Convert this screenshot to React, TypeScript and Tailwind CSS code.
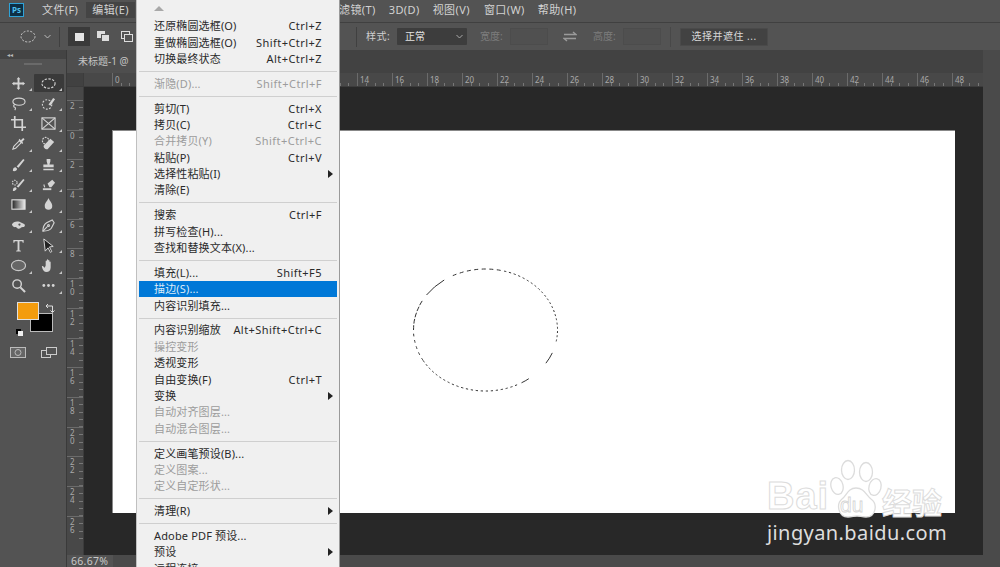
import type { ReactNode } from "react";

type MenuRow = { label?: string; keys?: string; off?: boolean; sub?: boolean; active?: boolean; sep?: boolean };

const menuRows: MenuRow[] = [
  { label: "还原椭圆选框(O)", keys: "Ctrl+Z" },
  { label: "重做椭圆选框(O)", keys: "Shift+Ctrl+Z" },
  { label: "切换最终状态", keys: "Alt+Ctrl+Z" },
  { sep: true },
  { label: "渐隐(D)...", keys: "Shift+Ctrl+F", off: true },
  { sep: true },
  { label: "剪切(T)", keys: "Ctrl+X" },
  { label: "拷贝(C)", keys: "Ctrl+C" },
  { label: "合并拷贝(Y)", keys: "Shift+Ctrl+C", off: true },
  { label: "粘贴(P)", keys: "Ctrl+V" },
  { label: "选择性粘贴(I)", sub: true },
  { label: "清除(E)" },
  { sep: true },
  { label: "搜索", keys: "Ctrl+F" },
  { label: "拼写检查(H)..." },
  { label: "查找和替换文本(X)..." },
  { sep: true },
  { label: "填充(L)...", keys: "Shift+F5" },
  { label: "描边(S)...", active: true },
  { label: "内容识别填充..." },
  { sep: true },
  { label: "内容识别缩放", keys: "Alt+Shift+Ctrl+C" },
  { label: "操控变形", off: true },
  { label: "透视变形" },
  { label: "自由变换(F)", keys: "Ctrl+T" },
  { label: "变换", sub: true },
  { label: "自动对齐图层...", off: true },
  { label: "自动混合图层...", off: true },
  { sep: true },
  { label: "定义画笔预设(B)..." },
  { label: "定义图案...", off: true },
  { label: "定义自定形状...", off: true },
  { sep: true },
  { label: "清理(R)", sub: true },
  { sep: true },
  { label: "Adobe PDF 预设..." },
  { label: "预设", sub: true },
  { label: "远程连接..." },
];

const Svg = ({ children, size = 15 }: { children: ReactNode; size?: number }) => (
  <svg width={size} height={size} viewBox="0 0 16 16" fill="none" stroke="currentColor" strokeWidth="1.2" className="text-[#d4d4d4]">
    {children}
  </svg>
);

const solid = { fill: "currentColor", stroke: "none" };

const tools: ReactNode[] = [
  <path d="M8 1l2 2.500H9V7h3.500V6L15 8l-2.500 2V9H9v3.500h1L8 15l-2-2.500h1V9H3.500v1L1 8l2.500-2v1H7V3.500H6z" {...solid} />,
  <ellipse cx="8" cy="8" rx="7" ry="5" strokeDasharray="2.500 1.500" />,
  <><ellipse cx="8.500" cy="6" rx="6.500" ry="3.800" /><path d="M4 9c-2 1-1 3 0 3s1 2 0 3" /></>,
  <><ellipse cx="6.500" cy="9" rx="5" ry="5" strokeDasharray="2 1.500" /><path d="M8 9l5-7 2 1.500-5 7z" {...solid} /></>,
  <path d="M4 0v12h12M0 4h12v12" strokeWidth="1.800" />,
  <><rect x="1" y="2" width="14" height="12" /><path d="M1 2l14 12M15 2L1 14" /></>,
  <><path d="M2 14l1-3 6-6 2 2-6 6z" /><path d="M9 3l1.500 1.500L13 2l1.500 1.500L12 6l1 1.500-1 1-4-4z" {...solid} /></>,
  <><circle cx="5" cy="5" r="3.500" strokeDasharray="2 1" /><path d="M3 10l7-7 4 3.500-7 7.500c-2 1-5-2-4-4z" {...solid} /></>,
  <path d="M2 15c0-3 1-4 3-4l1.500 1.500c0 2-2 3-4.500 2.500zM6 10L13 2l1.500 1.200L8 11.500z" {...solid} />,
  <path d="M6 2h4v2.500L9 8h4.500v3h-11V8H7L6 4.500zM2.500 12.500h11V14h-11z" {...solid} />,
  <><path d="M2 15c0-3 1-4 3-4l1 1c0 2-2 3-4 3zM6 10l7-8 1.500 1.200-6.500 8z" {...solid} /><circle cx="4" cy="6" r="2.500" strokeDasharray="1.500 1" /></>,
  <><path d="M7 7l5-4 3 3-4 5H9z" {...solid} /><path d="M2 13h9" strokeWidth="2" /><path d="M3 8l1 3" /></>,
  <><defs><linearGradient id="grad"><stop offset="0" stopColor="#222" /><stop offset="1" stopColor="#eee" /></linearGradient></defs><rect x="1" y="3" width="14" height="10" fill="url(#grad)" stroke="#ddd" /></>,
  <path d="M8 1c1 3 4 5 4 8.500a4 4 0 0 1-8 0C4 6 7 4 8 1z" {...solid} />,
  <><path d="M1 7c1-3 5-4 8-3 2 1 5 2 6 3.500l-1 2c-2 0-3 0-4 1.500-2 1-3 0-4-1-1 0-4 0-5-3z" {...solid} /><circle cx="9" cy="7" r="1.200" fill="#535353" stroke="none" /></>,
  <><path d="M2 14c0-4 1-7 4-9l6-3 2 3-3 6c-2 3-5 3-9 3z" /><path d="M2 14l5-5" /><circle cx="8" cy="8" r="1" /></>,
  <path d="M2.500 2h11v3h-1l-.500-1.500H9V13l1.500.500V14.500h-5v-1L7 13V3.500H4L3.500 5h-1z" {...solid} />,
  <path d="M3 1l10 8-4 .500 2.500 5-1.500 .800L7.500 10.500 4.500 14z" fill="#222" stroke="#ddd" strokeWidth="1" />,
  <ellipse cx="8" cy="8" rx="7.500" ry="5.500" strokeWidth="1.200" fill="#666" stroke="#c8c8c8" />,
  <path d="M5 8V3.500c0-1 1.300-1 1.300 0V7V2.200c0-1 1.400-1 1.400 0V7V2.800c0-1 1.300-1 1.300 0V7.500V4.500c0-1 1.300-1 1.300 0V10c0 3-2 5-4.500 5S2 13 1 9.500c-.3-1 1-1.500 1.500-.5L4 10.500z" {...solid} />,
  <><circle cx="6.500" cy="6.500" r="4.500" strokeWidth="1.500" /><path d="M10 10l5 5" strokeWidth="2.200" /></>,
  <><circle cx="3" cy="8" r="1.500" {...solid} /><circle cx="8" cy="8" r="1.500" {...solid} /><circle cx="13" cy="8" r="1.500" {...solid} /></>,
];

// 选区的虚线是逐段算出来的,图里有几处长段和缺口
const marquee = () => {
  const cx = 72.5;
  const cy = 62;
  const pt = (deg: number) => {
    const a = (deg * Math.PI) / 180;
    return `${(cx + 72 * Math.cos(a)).toFixed(1)} ${(cy + 61 * Math.sin(a)).toFixed(1)}`;
  };
  const parts: string[] = [];
  const arc = (from: number, to: number) => parts.push(`M${pt(from)}L${pt((from + to) / 2)}L${pt(to)}`);
  arc(215, 235);
  arc(22, 33);
  arc(53, 60);
  for (let d = 243; d < 285; d += 6) arc(d, d + 3.200);
  for (let d = 285; d < 370; d += 4) arc(d, d + 1.800);
  for (let d = 64; d < 150; d += 4) arc(d, d + 1.800);
  for (let d = 150; d < 210; d += 6) arc(d, d + (d > 175 ? 4.500 : 2.500));
  return parts.join("");
};

const Corner = () => <span className="absolute right-[2px] bottom-[1px] h-0 w-0 border-b-[3px] border-l-[3px] border-b-[#c4c4c4] border-l-transparent" />;

const hLabels = Array.from({ length: 25 }, (_, i) => i * 2);
const vLabels = Array.from({ length: 14 }, (_, i) => i * 2);

const ToolPanel = () => (
  <div className="flex h-full w-[67px] shrink-0 flex-col border-r border-[#3a3a3a] bg-[#535353]">
    <div className="flex h-[9px] items-center bg-[#444] pl-[7px] text-[6px] leading-none text-[#bbb]">◂◂</div>
    <div className="mx-auto mt-[4px] h-[2px] w-[18px] bg-[#6a6a6a]" />
    <div className="mt-[9px] grid grid-cols-[30px_30px] justify-center gap-y-[2.300px] pl-[4px] pr-[3px]">
      {tools.map((t, i) => (
        <div key={i} className={`relative flex h-[18px] items-center justify-center ${i === 1 ? "rounded-[1px] bg-[#3a3a3a]" : ""}`}>
          <Svg>{t}</Svg>
          {i !== 4 && i !== 16 && i !== 20 ? <Corner /> : null}
        </div>
      ))}
    </div>
    <div className="relative mt-[7px] h-[38px]">
      <div className="absolute left-[30px] top-[11px] h-[19px] w-[23px] border border-[#bbb] bg-black" />
      <div className="absolute left-[17px] top-0 h-[18px] w-[22px] border border-[#e0e0e0] bg-[#f39c0e]" />
      <svg width="11" height="11" viewBox="0 0 11 11" fill="none" stroke="#ddd" className="absolute left-[45px] top-[1px]">
        <path d="M1 3h6.500v6M1 3l2-2M1 3l2 2M7.500 9.500L5.500 7.500M7.500 9.500l2-2" />
      </svg>
      <div className="absolute left-[16px] top-[27px] h-[5px] w-[5px] bg-black" />
      <div className="absolute left-[18px] top-[29px] h-[5px] w-[5px] bg-[#eee]" />
    </div>
    <div className="mt-[7px] flex justify-between pl-[10px] pr-[9px]">
      <svg width="16" height="11" viewBox="0 0 16 11" fill="none" stroke="#bbb">
        <rect x=".5" y=".5" width="15" height="10" fill="#666" />
        <circle cx="8" cy="5.500" r="3" />
      </svg>
      <div className="relative">
        <svg width="16" height="11" viewBox="0 0 16 11" fill="none" stroke="#ccc">
          <rect x=".5" y="3.500" width="9" height="7" />
          <rect x="5.500" y=".5" width="10" height="7" fill="#535353" />
        </svg>
      </div>
    </div>
  </div>
);

const Canvas = () => (
  <div className="flex min-h-0 flex-1">
    <div className="flex w-[17px] shrink-0 flex-col overflow-hidden border-r border-[#3c3c3c] bg-[#484848] pt-[13px]">
      {[-2, ...vLabels].map((n) => (
        <div
          key={n}
          className="h-[29.700px] shrink-0 border-t border-[#6b6b6b] bg-[repeating-linear-gradient(180deg,transparent_0,transparent_6.400px,#777_6.400px,#777_7.400px)] bg-[length:4px_100%] bg-right bg-no-repeat pl-[3px] pt-[1px] text-[8px] leading-[8px] text-[#a9a9a9]"
        >
          <div className="w-[6px] break-all">{Math.abs(n)}</div>
        </div>
      ))}
    </div>
    <div className="flex flex-1 flex-col bg-[#282828] px-[28px] pb-[42px] pt-[43px]">
      <div className="relative flex-1 border-l border-t border-[#888] bg-white">
        <svg width="146" height="124" viewBox="0 0 146 124" fill="none" stroke="#333" strokeWidth="1" className="absolute left-[300px] top-[137px]">
          <path d={marquee()} />
        </svg>
      </div>
    </div>
  </div>
);

const Baidu = () => (
  <div className="pointer-events-none absolute left-[767px] top-[458px] h-[90px] w-[185px]">
    <div className="absolute left-0 top-[18px] font-['Liberation_Sans',sans-serif] text-[38px] font-bold leading-[40px] tracking-[1px] text-white [-webkit-text-stroke:1px_#dcdcdc]">Bai</div>
    <svg width="60" height="62" viewBox="0 0 60 62" className="absolute left-[63px] top-0" fill="#fff" stroke="#dcdcdc" strokeWidth="1.300">
      <ellipse cx="18" cy="12" rx="6.500" ry="9.500" />
      <ellipse cx="36" cy="14" rx="6.500" ry="9.500" />
      <ellipse cx="7" cy="28" rx="6" ry="8.500" transform="rotate(-15 7 28)" />
      <ellipse cx="45" cy="29" rx="6" ry="8.500" transform="rotate(15 45 29)" />
      <path d="M26 30c-8 0-9 7-14 11-6 5-4 18 6 18 4 0 6-1 9-1s5 1 9 1c10 0 12-13 5-18-5-4-7-11-15-11z" />
    </svg>
    <div className="absolute left-[73px] top-[37px] font-['Liberation_Sans',sans-serif] text-[21px] leading-[20px] text-white [-webkit-text-stroke:.8px_#d4d4d4]">du</div>
    <div className="absolute left-[115px] top-[27px] font-['Noto_Sans_CJK_SC',sans-serif] text-[30px] font-bold leading-[32px] text-white [-webkit-text-stroke:1px_#dcdcdc]">经验</div>
    <div className="absolute left-0 top-[63px] font-['Noto_Sans',sans-serif] text-[20px] leading-[24px] tracking-[.4px] text-[#dedede]">jingyan.baidu.com</div>
  </div>
);

const EditMenu = () => (
  <div className="absolute left-[137px] top-0 h-[567px] w-[202px] overflow-hidden border-x-2 border-x-[#f0f0f0] bg-[#f0f0f0] text-[11px] text-[#2a2a2a] shadow-[1px_0_0_#9a9a9a,-1px_0_0_#c0c0c0]">
    <div className="flex h-[18px] items-start pl-[15px] pt-[6px]">
      <span className="h-0 w-0 border-x-[5px] border-b-[5px] border-x-transparent border-b-[#a8a8a8]" />
    </div>
    {menuRows.map((r, i) =>
      r.sep ? (
        <div key={i} className="flex h-[8.400px] items-center">
          <div className="h-px w-full bg-[#cfcfcf]" />
        </div>
      ) : (
        <div
          key={i}
          className={`relative flex h-[16.400px] items-center justify-between pl-[15px] pr-[15px] leading-[16px] tracking-[.15px] ${r.active ? "bg-[#0078d7] text-[#dcebf8]" : ""} ${r.off ? "text-[#9c9c9c]" : ""}`}
        >
          <span>{r.label}</span>
          {r.keys ? <span className="tracking-[.45px]">{r.keys}</span> : null}
          {r.sub ? <span className="absolute right-[4px] h-0 w-0 border-y-[4px] border-l-[5px] border-y-transparent border-l-[#222]" /> : null}
        </div>
      ),
    )}
  </div>
);

export default function App() {
  return (
    <div className="relative flex h-[567px] w-[1000px] flex-col overflow-hidden bg-[#535353] font-['Noto_Sans','Noto_Sans_CJK_SC',sans-serif]">
      {/* menu bar */}
      <div className="flex h-[23px] shrink-0 items-center border-b border-[#404040] pb-[2px] text-[11px] leading-[16px] tracking-[.4px] text-[#d2d2d2]">
        <div className="ml-[9px] flex h-[14px] w-[15px] items-center justify-center border border-[#2fa3d8] bg-[#0d2f45] text-[8px] font-bold leading-none tracking-normal text-[#4fc0ef]">Ps</div>
        <span className="ml-[18px]">文件(F)</span>
        <span className="ml-[8px] bg-[#444] px-[6px]">编辑(E)</span>
        <span className="ml-[204px]">滤镜(T)</span>
        <span className="ml-[13px]">3D(D)</span>
        <span className="ml-[13px]">视图(V)</span>
        <span className="ml-[14px]">窗口(W)</span>
        <span className="ml-[13px]">帮助(H)</span>
      </div>

      {/* options bar */}
      <div className="flex h-[27px] shrink-0 items-center text-[10px] text-[#cfcfcf]">
        <svg width="16" height="13" viewBox="0 0 16 13" fill="none" stroke="#ccc" strokeDasharray="2 1.500" className="ml-[20px]">
          <ellipse cx="8" cy="6.500" rx="7" ry="5.500" />
        </svg>
        <svg width="7" height="5" viewBox="0 0 7 5" fill="none" stroke="#bbb" className="ml-[8px]">
          <path d="M.5 1l3 3 3-3" />
        </svg>
        <div className="ml-[8px] h-[20px] w-px bg-[#404040]" />
        <div className="ml-[8px] flex h-[19px] w-[22px] items-center justify-center bg-[#3a3a3a]">
          <div className="h-[8px] w-[9px] bg-[#e4e4e4]" />
        </div>
        <div className="relative ml-[7px] h-[11px] w-[13px]">
          <div className="absolute left-0 top-0 h-[7px] w-[8px] bg-[#ddd]" />
          <div className="absolute left-[4px] top-[3px] h-[8px] w-[9px] border border-[#535353] bg-[#ddd]" />
        </div>
        <div className="relative ml-[11px] h-[11px] w-[13px]">
          <div className="absolute left-0 top-0 h-[8px] w-[9px] border border-[#ddd]" />
          <div className="absolute left-[3px] top-[3px] h-[8px] w-[9px] border border-[#ddd] bg-[#535353]" />
        </div>
        <div className="ml-[222px] h-[20px] w-px bg-[#404040]" />
        <span className="ml-[9px] w-[31px] tracking-[.5px]">样式:</span>
        <div className="flex h-[17px] w-[70px] items-center justify-between rounded-[1px] bg-[#3d3d3d] pl-[8px] pr-[4px] text-[#e2e2e2]">
          <span>正常</span>
          <svg width="7" height="5" viewBox="0 0 7 5" fill="none" stroke="#aaa">
            <path d="M.5 1l3 3 3-3" />
          </svg>
        </div>
        <span className="ml-[13px] w-[30px] text-[#7d7d7d]">宽度:</span>
        <div className="h-[17px] w-[38px] border border-[#4c4c4c] bg-[#505050]" />
        <svg width="14" height="11" viewBox="0 0 14 11" fill="none" stroke="#9a9a9a" className="ml-[15px]">
          <path d="M1 3.500h12L10 1M13 7.500H1L4 10" strokeWidth="1.400" />
        </svg>
        <span className="ml-[16px] w-[30px] text-[#7d7d7d]">高度:</span>
        <div className="h-[17px] w-[38px] border border-[#4c4c4c] bg-[#505050]" />
        <div className="ml-[9px] h-[20px] w-px bg-[#484848]" />
        <div className="ml-[9px] flex h-[18px] w-[88px] items-center justify-center rounded-[1px] border border-[#4a4a4a] bg-[#424242] tracking-[.5px] text-[#d8d8d8]">选择并遮住 ...</div>
      </div>

      {/* body */}
      <div className="flex min-h-0 flex-1">
        <ToolPanel />
        <div className="flex min-w-0 flex-1 flex-col bg-[#4a4a4a]">
          <div className="flex min-h-0 flex-1">
            <div className="flex min-w-0 flex-1 flex-col">
              <div className="flex h-[23px] shrink-0 bg-[#424242]">
                <div className="flex w-[80px] items-center bg-[#4e4e4e] pl-[11px] text-[10px] text-[#c4c4c4]">未标题-1 @</div>
              </div>
              <div className="flex h-[14px] shrink-0 border-b border-[#3c3c3c] bg-[#484848]">
                <div className="w-[17px] shrink-0 border-r border-[#3c3c3c] bg-[#414141]" />
                <div className="flex flex-1 overflow-hidden pl-[28px]">
                  {hLabels.map((n) => (
                    <div
                      key={n}
                      className="w-[35px] shrink-0 border-l border-[#6b6b6b] bg-[repeating-linear-gradient(90deg,transparent_0,transparent_7.750px,#777_7.750px,#777_8.750px)] bg-[length:100%_3px] bg-bottom bg-no-repeat pl-[2px] text-[8px] leading-[13px] text-[#a9a9a9]"
                    >
                      {/* 2-12 are under the open menu */}
                      {n > 0 && n < 14 ? "" : n}
                    </div>
                  ))}
                </div>
              </div>
              <Canvas />
            </div>
            <div className="w-[17px] shrink-0 bg-[#4a4a4a]" />
          </div>
          <div className="flex h-[12px] shrink-0 bg-[#4a4a4a]">
            <div className="w-[46px] bg-[#535353] pl-[4px] text-[10.500px] leading-[12px] tracking-[.3px] text-[#c8c8c8]">66.67%</div>
          </div>
        </div>
      </div>

      <EditMenu />
      <Baidu />
    </div>
  );
}
